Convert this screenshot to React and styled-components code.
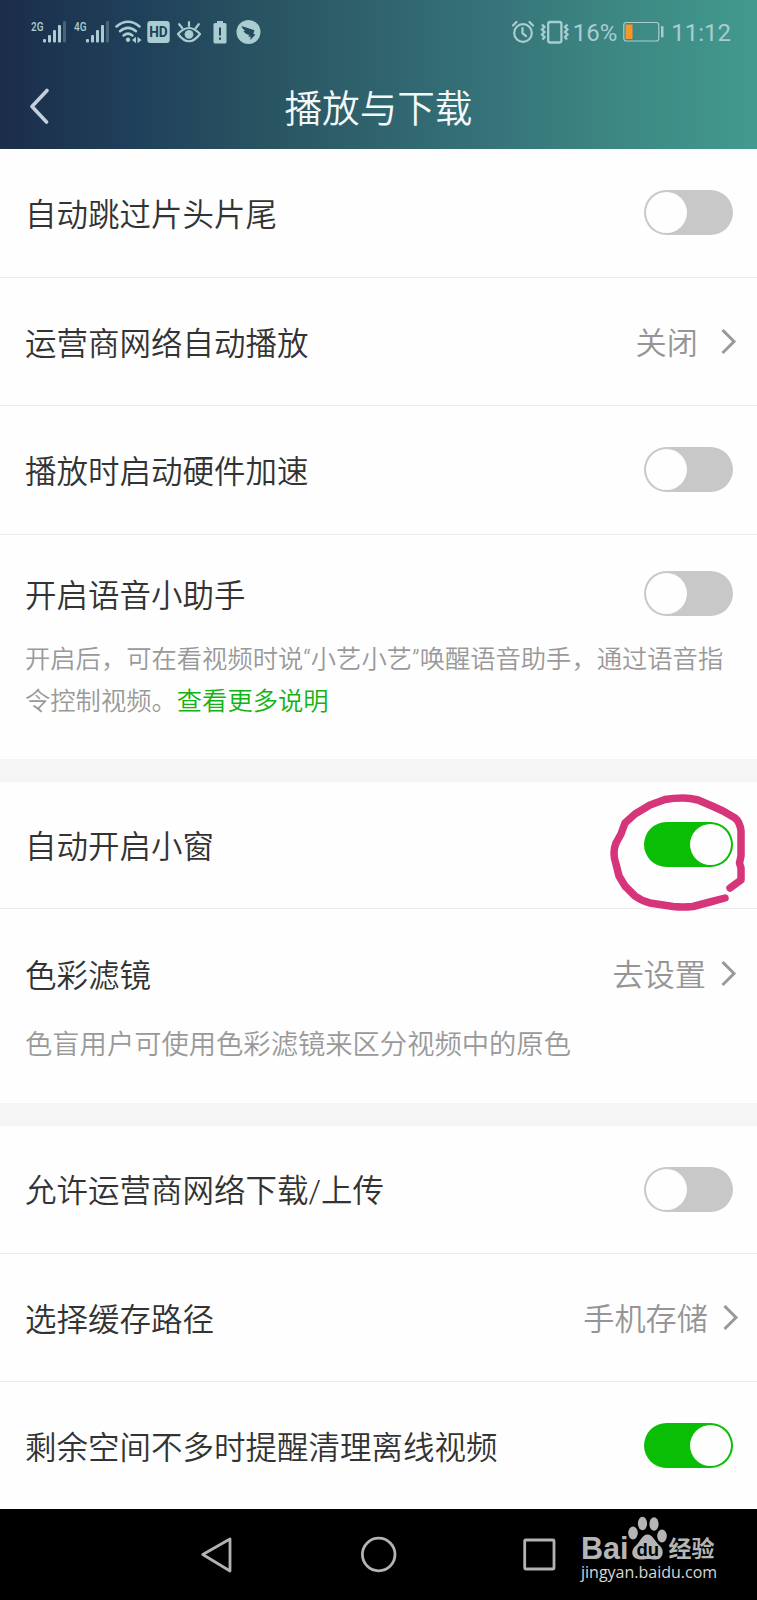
import React, { useState } from "react";
import styled, { createGlobalStyle } from "styled-components";

const GlobalStyle = createGlobalStyle`
  * {
    box-sizing: border-box;
  }
  body {
    margin: 0;
    background: #fefefe;
    font-family: Roboto, "Noto Sans CJK SC", sans-serif;
    font-weight: 350;
  }
`;

const Screen = styled.div`
  width: 757px;
  height: 1600px;
  display: flex;
  flex-direction: column;
  overflow: hidden;
  background: #fefefe;
`;

const Header = styled.header`
  flex: none;
  height: 149px;
  background: linear-gradient(
    90deg,
    #1b2d4a 0%,
    #20405a 18%,
    #2a5763 38%,
    #36737a 65%,
    #3c8681 80%,
    #429a8e 100%
  );
`;

const StatusBar = styled.div`
  height: 64px;
  padding: 0 26px 0 31px;
  display: flex;
  align-items: center;
  justify-content: space-between;
  color: #a9cdd0;
  font-family: Roboto, sans-serif;
  font-weight: 400;
`;

const StatusGroup = styled.div`
  display: flex;
  align-items: center;
  svg {
    display: block;
  }
`;

const Gap = styled.span`
  flex: none;
  width: ${({ $w }) => $w}px;
`;

const StatusText = styled.span`
  padding-top: 2px;
  font-size: 24px;
  line-height: 30px;
  margin: ${({ $margin }) => $margin};
`;

const TitleBar = styled.div`
  height: 85px;
  display: grid;
  grid-template-columns: 90px 1fr 90px;
  align-items: center;
`;

const BackButton = styled.button`
  border: 0;
  padding: 0 0 1px 29px;
  background: none;
  display: flex;
`;

const Title = styled.h1`
  margin: 5px 0 0;
  text-align: center;
  color: #f3f8f8;
  font-size: 37.6px;
  line-height: 50px;
  font-weight: 350;
`;

const List = styled.main`
  flex: none;
  height: 1360px;
`;

const Section = styled.section`
  & + & {
    border-top: 23px solid #f5f5f5;
  }
`;

const Item = styled.div`
  height: ${({ $height }) => $height || 128}px;
  padding-top: ${({ $top }) => $top || 0}px;
  border-bottom: ${({ $last }) => ($last ? "0" : "1px solid #ebebeb")};
`;

const Line = styled.div`
  height: ${({ $height }) => $height || 127}px;
  padding: 0 24px 0 25px;
  display: flex;
  align-items: center;
  justify-content: space-between;
`;

const Label = styled.span`
  padding-top: 6px;
  color: #333;
  font-size: 31.5px;
  line-height: 46px;
  white-space: nowrap;
`;

const Value = styled.span`
  display: flex;
  align-items: center;
  gap: ${({ $gap }) => $gap}px;
  margin-right: ${({ $shift }) => $shift || -4}px;
  color: #959595;
`;

const ValueText = styled.span`
  padding-top: 5px;
  font-size: 31.2px;
  line-height: 46px;
`;

const Description = styled.p`
  margin: ${({ $top }) => $top}px 25px 0;
  color: #999;
  font-size: ${({ $size }) => $size || 25.3}px;
  line-height: 42px;
  white-space: nowrap;
`;

const MoreLink = styled.a`
  color: #12b312;
`;

const Track = styled.button`
  position: relative;
  width: 89px;
  height: 45px;
  padding: 2px;
  border: 0;
  border-radius: 23px;
  display: flex;
  justify-content: ${({ $on }) => ($on ? "flex-end" : "flex-start")};
  background: ${({ $on }) => ($on ? "#0abe06" : "#c8c8c8")};
`;

const Knob = styled.span`
  width: 41px;
  height: 41px;
  border-radius: 50%;
  background: #fefefe;
`;

/* hand-drawn ring laid over the switch */
const Ring = styled.svg`
  position: absolute;
  left: -34px;
  top: -31px;
  pointer-events: none;
`;

const NavBar = styled.nav`
  flex: none;
  height: 91px;
  padding-left: 201px;
  background: #000;
  display: flex;
  align-items: center;
  svg {
    flex: none;
  }
`;

const Watermark = styled.div`
  margin: 0 0 4px 24px;
  color: #b5b5b5;
`;

const Brand = styled.div`
  height: 43px;
  display: flex;
  align-items: flex-end;
  font-family: "Liberation Sans", sans-serif;
  font-weight: 700;
  font-size: 30.5px;
  line-height: 26px;
  svg {
    margin-bottom: 1px;
  }
`;

const BrandCn = styled.span`
  margin-bottom: 1px;
  font-family: "Noto Sans CJK SC", sans-serif;
  font-size: 23px;
`;

const Site = styled.div`
  height: 26px;
  font-family: "Open Sans", sans-serif;
  font-weight: 400;
  font-size: 16px;
  line-height: 22px;
  color: #d6d6d6;
`;

const Signal = ({ label }) => (
  <svg width="36" height="26" viewBox="0 0 36 26" fill="currentColor">
    <text x="0" y="12" fontSize="13.5" fontWeight="500" textLength="12.5" lengthAdjust="spacingAndGlyphs">
      {label}
    </text>
    <rect x="12" y="20" width="3" height="3.5" rx="1" />
    <rect x="17" y="16" width="3" height="7.5" rx="1" />
    <rect x="22" y="11" width="3" height="12.5" rx="1" />
    <rect x="27" y="6" width="3" height="17.5" rx="1" />
    <rect x="32" y="2" width="3" height="21.5" rx="1" opacity=".3" />
  </svg>
);

const Wifi = () => (
  <svg width="27" height="26" viewBox="0 0 27 26" fill="none" stroke="currentColor" strokeWidth="2.5" strokeLinecap="round">
    <path d="M1.5 7.5Q13 -2 24.5 7.5" />
    <path d="M5 12.3Q13 5.5 21 12.3" />
    <path d="M8.5 16.5Q13 12.8 17.5 16.5" />
    <circle cx="13" cy="20.8" r="2.2" fill="currentColor" stroke="none" />
    <path d="M17 21l4-3.2v6.4zM26.5 21l-4-3.2v6.4z" fill="currentColor" stroke="none" />
  </svg>
);

const HdBadge = () => (
  <svg width="23" height="26" viewBox="0 0 23 26">
    <rect x="0.3" y="2" width="22.4" height="22" rx="3" fill="currentColor" />
    <text x="2.2" y="18.3" fontSize="15" fontWeight="700" fill="#223f57" textLength="18.5" lengthAdjust="spacingAndGlyphs">
      HD
    </text>
  </svg>
);

const Eye = () => (
  <svg width="24" height="26" viewBox="0 0 24 26" fill="none" stroke="currentColor" strokeWidth="2.2" strokeLinecap="round">
    <path d="M1 15Q12 3 23 15Q12 29.5 1 15Z" />
    <circle cx="12" cy="15.3" r="4.4" fill="currentColor" stroke="none" />
    <path d="M12 3v4M2.2 5.2l3 3.8M21.8 5.2l-3 3.8" />
  </svg>
);

const BatteryAlert = () => (
  <svg width="14" height="26" viewBox="0 0 14 26" fill="currentColor">
    <rect x="4" y="2" width="6" height="3" />
    <rect x="0.5" y="4" width="13" height="20.5" rx="1.5" />
    <path d="M7 8.5v8M7 18.5v2.2" stroke="#23465b" strokeWidth="2" />
  </svg>
);

const BirdBadge = () => (
  <svg width="25" height="26" viewBox="0 0 25 26">
    <circle cx="12.5" cy="13" r="12" fill="currentColor" />
    <path
      d="M5.5 7l13 4.2-1.2 3.8 2.2.5-5.2 5.5.3-3.4-2.3.3 1-1.8C10 15 8 13.5 7.3 12l2.2.1C7.5 10.5 6 9 5.5 7z"
      fill="#254a5d"
    />
  </svg>
);

const Alarm = () => (
  <svg width="22" height="24" viewBox="0 0 22 24" fill="none" stroke="currentColor" strokeWidth="2.2" strokeLinecap="round">
    <circle cx="11" cy="13" r="8.8" />
    <path d="M10.5 8v5.2l3.5 3M1 5.5l3.5-3.5M21 5.5l-3.5-3.5" />
  </svg>
);

const Vibrate = () => (
  <svg width="30" height="24" viewBox="0 0 30 24" fill="none" stroke="currentColor" strokeWidth="2.3">
    <rect x="8.2" y="2" width="13.2" height="20.5" rx="2" />
    <path d="M2 4.5l2.5 2.5-2.5 2.5 2.5 2.5-2.5 2.5 2.5 2.5-2 2.5M27.5 4.5l-2.5 2.5 2.5 2.5-2.5 2.5 2.5 2.5-2.5 2.5 2 2.5" />
  </svg>
);

const Battery = () => (
  <svg width="41" height="22" viewBox="0 0 41 22" fill="none">
    <rect x="0.8" y="1.5" width="35" height="18.5" rx="2.5" stroke="currentColor" strokeWidth="1.2" />
    <rect x="2.5" y="3.5" width="7" height="14.5" fill="#f6962a" />
    <rect x="38" y="5" width="2.5" height="11.5" rx="1" fill="currentColor" />
  </svg>
);

const Chevron = () => (
  <svg width="16" height="26" viewBox="0 0 16 26" fill="none" stroke="#999" strokeWidth="3">
    <path d="M1.5 1L13 12.5L1.5 24" />
  </svg>
);

const Paw = () => (
  <svg width="40" height="46" viewBox="0 0 40 46" fill="currentColor">
    <ellipse cx="5" cy="19" rx="4.8" ry="6.5" />
    <ellipse cx="14.5" cy="9.5" rx="4.6" ry="6.8" />
    <ellipse cx="26" cy="10" rx="4.6" ry="6.8" />
    <ellipse cx="34" cy="22" rx="4.8" ry="6.5" />
    <path d="M19.5 20.5C25 20.5 27 28 31.5 31.5C37 36 35 45.5 28 45.5C23 45.5 22 44.5 17 45.3C6 47 1 40 6.5 33C12 29 13.5 20.5 19.5 20.5Z" />
    <text x="8.5" y="41.5" fontFamily="Liberation Sans" fontSize="18.5" fontWeight="700" fill="#000">
      du
    </text>
  </svg>
);

const Toggle = ({ defaultOn = false, ringed }) => {
  const [on, setOn] = useState(defaultOn);
  return (
    <Track $on={on} onClick={() => setOn(!on)}>
      <Knob />
      {ringed && (
        <Ring
          width="136"
          height="122"
          viewBox="0 0 136 122"
          fill="none"
          stroke="#d6357a"
          strokeWidth="7.5"
          strokeLinecap="round"
          strokeLinejoin="round"
        >
          <path d="M120 97L131 89L131 77L129.5 72L131 65L131 40Q130 31 125 27L113 20L102 15L88 9Q80 7 73 7Q63 7 55 8.5L40 14L25 23L15 32L11 43L6 52Q4 57 4 62Q4 68 6 73L9 85L15 95L25 105Q32 110 40 112L63 115.5Q73 116.5 83 115.5L100 111L115 107" />
        </Ring>
      )}
    </Track>
  );
};

const Link = ({ text, gap = 15, shift }) => (
  <Value $gap={gap} $shift={shift}>
    <ValueText>{text}</ValueText>
    <Chevron />
  </Value>
);

const App = () => {
  return (
    <>
      <GlobalStyle />
      <Screen>
        <Header>
          <StatusBar>
            <StatusGroup>
              <Signal label="2G" />
              <Gap $w={7} />
              <Signal label="4G" />
              <Gap $w={5} />
              <Wifi />
              <Gap $w={5} />
              <HdBadge />
              <Gap $w={7} />
              <Eye />
              <Gap $w={12} />
              <BatteryAlert />
              <Gap $w={9} />
              <BirdBadge />
            </StatusGroup>
            <StatusGroup>
              <Alarm />
              <Gap $w={6} />
              <Vibrate />
              <StatusText $margin="0 6px 0 3px">16%</StatusText>
              <Battery />
              <StatusText $margin="0 0 0 7px">11:12</StatusText>
            </StatusGroup>
          </StatusBar>
          <TitleBar>
            <BackButton>
              <svg width="21" height="36" viewBox="0 0 21 36" fill="none" stroke="#c3d0dc" strokeWidth="3.6" strokeLinecap="round" strokeLinejoin="round">
                <path d="M18 2.5L3 18.5L17.5 34" />
              </svg>
            </BackButton>
            <Title>播放与下载</Title>
          </TitleBar>
        </Header>

        <List>
          <Section>
            <Item $height={129}>
              <Line>
                <Label>自动跳过片头片尾</Label>
                <Toggle />
              </Line>
            </Item>
            <Item>
              <Line>
                <Label>运营商网络自动播放</Label>
                <Link text="关闭" gap={23} />
              </Line>
            </Item>
            <Item $height={129}>
              <Line>
                <Label>播放时启动硬件加速</Label>
                <Toggle />
              </Line>
            </Item>
            <Item $height={224} $top={19} $last>
              <Line $height={79}>
                <Label>开启语音小助手</Label>
                <Toggle />
              </Line>
              <Description $top={6}>
                开启后，可在看视频时说“小艺小艺”唤醒语音助手，通过语音指
                <br />
                令控制视频。<MoreLink>查看更多说明</MoreLink>
              </Description>
            </Item>
          </Section>

          <Section>
            <Item $height={127}>
              <Line $height={125}>
                <Label>自动开启小窗</Label>
                <Toggle defaultOn ringed />
              </Line>
            </Item>
            <Item $height={194} $last>
              <Line $height={129}>
                <Label>色彩滤镜</Label>
                <Link text="去设置" />
              </Line>
              <Description $top={-14} $size={27.3}>
                色盲用户可使用色彩滤镜来区分视频中的原色
              </Description>
            </Item>
          </Section>

          <Section>
            <Item>
              <Line $height={126}>
                <Label>允许运营商网络下载/上传</Label>
                <Toggle />
              </Line>
            </Item>
            <Item>
              <Line>
                <Label>选择缓存路径</Label>
                <Link text="手机存储" shift={-6} />
              </Line>
            </Item>
            <Item $last>
              <Line>
                <Label>剩余空间不多时提醒清理离线视频</Label>
                <Toggle defaultOn />
              </Line>
            </Item>
          </Section>
        </List>

        <NavBar>
          <svg width="356" height="40" viewBox="0 0 356 40" fill="none" stroke="#b3b3b3" strokeWidth="2.8" strokeLinejoin="round">
            <path d="M29 4V36L1.8 19.5Z" />
            <circle cx="177.7" cy="19.5" r="16.3" />
            <rect x="323.7" y="5" width="29.3" height="29" rx="1" />
          </svg>
          <Watermark>
            <Brand>
              Bai
              <Paw />
              <BrandCn>经验</BrandCn>
            </Brand>
            <Site>jingyan.baidu.com</Site>
          </Watermark>
        </NavBar>
      </Screen>
    </>
  );
};

export default App;
